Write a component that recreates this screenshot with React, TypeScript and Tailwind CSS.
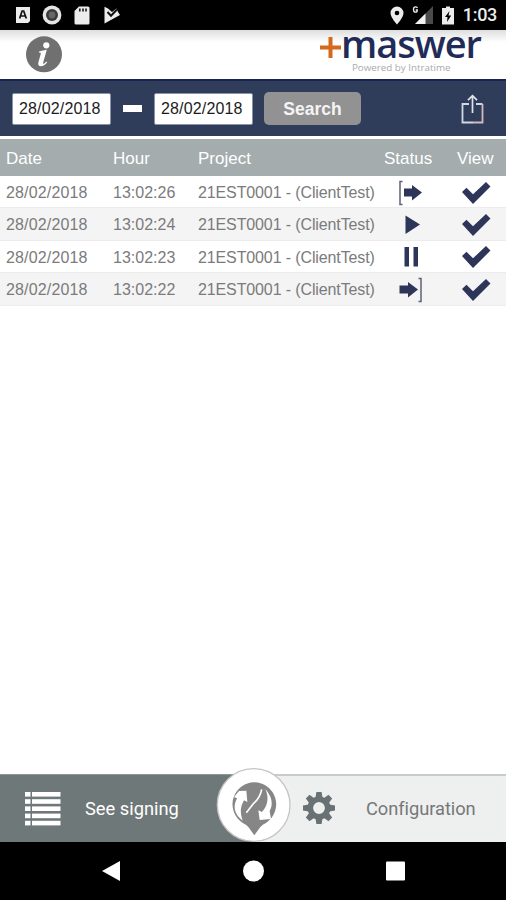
import { ReactNode } from "react";
import { clsx } from "clsx";

type Status = "in" | "play" | "pause" | "out";

interface Signing {
  date: string;
  hour: string;
  project: string;
  status: Status;
}

const signings: Signing[] = [
  { date: "28/02/2018", hour: "13:02:26", project: "21EST0001 - (ClientTest)", status: "in" },
  { date: "28/02/2018", hour: "13:02:24", project: "21EST0001 - (ClientTest)", status: "play" },
  { date: "28/02/2018", hour: "13:02:23", project: "21EST0001 - (ClientTest)", status: "pause" },
  { date: "28/02/2018", hour: "13:02:22", project: "21EST0001 - (ClientTest)", status: "out" },
];

const columns = "grid grid-cols-[107px_84px_187px_68px_60px] pl-1.5 w-[512px]";

function StatusBar() {
  return (
    <div className="flex h-[30px] shrink-0 items-center bg-black pl-4 pr-[9px] text-[#ececec]">
      <svg width="14" height="16" viewBox="0 0 14 16">
        <path d="M0 0h14v14l-2 2H0z" fill="#ececec" />
        <path d="M3.6 11.5 6.1 4h1.6l2.6 7.5M4.5 9h5" fill="none" stroke="#111" strokeWidth="1.7" />
      </svg>
      <svg className="ml-[12px]" width="20" height="20" viewBox="0 0 20 20">
        <circle cx="10" cy="10" r="9.4" fill="#e6e6e6" />
        <circle cx="10" cy="10" r="6" fill="#3a3a3a" />
        <circle cx="10" cy="10" r="3.4" fill="#666" />
      </svg>
      <svg className="ml-[12px]" width="16" height="19" viewBox="0 0 16 19">
        <path d="M5 .5h9q1.5 0 1.5 1.5v15q0 1.5-1.5 1.5H2Q.5 18.5.5 17V5z" fill="#ececec" />
        <path d="M5.8 2.5v3M9 2.5v3M12 2.5v3" stroke="#222" strokeWidth="1.7" />
      </svg>
      <svg className="ml-[14px]" width="17" height="18" viewBox="0 0 17 18">
        <path d="M.5.8 4 2.6 8 6l4.500-3.500L14 6l2 3L.5 17.500z" fill="#ececec" />
        <path d="m3.500 6 3.500 3.800L13 3.500" fill="none" stroke="#111" strokeWidth="2" />
      </svg>
      <div className="ml-auto flex items-center">
        <svg width="14" height="19" viewBox="0 0 14 19">
          <path d="M7 .5a6.500 6.500 0 0 1 6.500 6.500C13.500 11.500 7 18.500 7 18.500S.5 11.500.5 7A6.500 6.500 0 0 1 7 .5z" fill="#ececec" />
          <circle cx="7" cy="7" r="2.300" fill="#000" />
        </svg>
        <svg className="ml-[8px]" width="21" height="20" viewBox="0 0 21 20">
          <path d="M21 1v18H3z" fill="#4a4a4a" />
          <path d="M13.500 8.500V19H3z" fill="#f2f2f2" />
          <path d="M5.500 2.800Q4.800 1.800 3.500 1.800 1.500 1.800 1.500 4.500T3.500 7.200Q5.300 7.200 5.300 5H3.700" fill="none" stroke="#ececec" strokeWidth="1.300" />
        </svg>
        <svg className="ml-[9px]" width="12" height="19" viewBox="0 0 12 19">
          <path d="M4 .5h4V2h4v16.500H0V2h4z" fill="#ececec" />
          <path d="M7.500 5 3 11h2.500L5 16l4.200-6.500H6.500z" fill="#000" />
        </svg>
        <span className="ml-[9px] font-[Roboto] text-[18px] leading-[24px] font-medium tracking-[-0.3px]">1:03</span>
      </div>
    </div>
  );
}

function Header() {
  return (
    <header className="flex h-[49px] shrink-0 items-start justify-between bg-linear-to-b from-[#dedede] via-white via-25% to-white pr-[25px] pl-[26px]">
      <svg className="mt-[6px]" width="36" height="37" viewBox="0 0 36 37">
        <circle cx="18" cy="18.300" r="18" fill="#707070" />
        <circle cx="20.300" cy="9.300" r="3.100" fill="#fff" />
        <path d="M13 15.500q4-1 7.800-1.700l-3.600 12.600q-.4 2 1 1.200l2.300-2.100.7.700q-3 4-6.200 4-3.500-.2-2.600-4l2.400-8.400q.3-1.300-2-1.200z" fill="#fff" />
      </svg>
      <div className="flex flex-col">
        <div className="flex h-[32px] items-start">
          <svg className="mt-[7px]" width="21" height="22" viewBox="0 0 21 22">
            <path d="M10.500 0v21M0 10.600h21" stroke="#d36a1c" strokeWidth="4" />
          </svg>
          <span className="-mt-[2px] font-['Open_Sans'] text-[38px] leading-[30px] font-semibold tracking-[-1px] text-[#1f2c57]">maswer</span>
        </div>
        <span className="ml-[32px] font-['Open_Sans'] text-[9.8px] leading-[12px] text-[#a9a9a9]">Powered by Intratime</span>
      </div>
    </header>
  );
}

function DateField({ value }: { value: string }) {
  return (
    <div className="h-[32px] w-[99px] rounded-[2px] border border-[#8a94a8] bg-white pl-[6px] text-[16px] leading-[30px] tracking-[0.15px] text-[#1c1c1c]">
      {value}
    </div>
  );
}

function SearchBar() {
  return (
    <div className="flex h-[57px] shrink-0 items-center border-t-2 border-[#1b2450] bg-[#2f3d5b] pr-[22px] pl-[12px]">
      <DateField value="28/02/2018" />
      <div className="mx-[12px] h-[7px] w-[19px] bg-white" />
      <DateField value="28/02/2018" />
      <button className="ml-[11px] h-[33px] w-[97px] rounded-[5px] bg-[#929292] text-[17.5px] leading-[32px] font-bold text-[#f4f4f4]">
        Search
      </button>
      <svg className="ml-auto" width="23" height="30" viewBox="0 0 23 30">
        <path d="M8 10H1.500v18.500H12M15 10h6.500" fill="none" stroke="#d0d8e2" strokeWidth="1.800" />
        <path d="M21.500 10v18.500H12" fill="none" stroke="#d5b9bf" strokeWidth="1.800" />
        <path d="M11.500 19V2M7 6.200l4.500-4.500L16 6.200" fill="none" stroke="#dfe3ea" strokeWidth="1.700" />
      </svg>
    </div>
  );
}

function StatusIcon({ status }: { status: Status }) {
  return (
    <svg width="26" height="26" viewBox="0 0 26 26" fill="#2d3659">
      {status === "in" && (
        <>
          <path d="M5.500 1.500H3v23h2.500" fill="none" stroke="#5d6275" strokeWidth="1.500" />
          <path d="M7 8.500h8V5l10 7.500-10 8v-4H7z" />
        </>
      )}
      {status === "play" && <path d="M8.500 3.500 23 12.500 8.500 22z" />}
      {status === "pause" && <path d="M7.500 3H12v19.500H7.500zM16.500 3H21v19.500h-4.500z" />}
      {status === "out" && (
        <>
          <path d="M21.500 1.500H24v23h-2.500" fill="none" stroke="#5d6275" strokeWidth="1.500" />
          <path d="M2.500 8.500h8.500V5l10 7.500-10 8v-4H2.500z" />
        </>
      )}
    </svg>
  );
}

function SigningsTable() {
  return (
    <div className="mt-[3px] overflow-hidden">
      <div className={clsx(columns, "h-[37px] bg-[#a4acae] text-[17px] leading-[39px] text-white")}>
        <span>Date</span>
        <span>Hour</span>
        <span className="pl-px">Project</span>
        <span>Status</span>
        <span className="pl-[5px]">View</span>
      </div>
      {signings.map((s, i) => (
        <div
          key={s.hour}
          className={clsx(
            columns,
            "h-[32.4px] border-b border-[#ececec] text-[16px] leading-[33px] text-[#7b7b7b]",
            i % 2 === 1 ? "bg-[#f4f4f4]" : "bg-white",
          )}
        >
          <span className="tracking-[0.15px]">{s.date}</span>
          <span>{s.hour}</span>
          <span className="pl-px tracking-[-0.12px] whitespace-nowrap">{s.project}</span>
          <span className="flex items-center pl-[13px]">
            <StatusIcon status={s.status} />
          </span>
          <span className="flex items-center pl-[9px]">
            <svg width="30" height="24" viewBox="0 0 30 24">
              <path d="m1 11 4.500-4.200 6.500 6.500L25 1l4.500 4.500L12 23z" fill="#2d3659" />
            </svg>
          </span>
        </div>
      ))}
    </div>
  );
}

function Tab({ active, icon, children }: { active?: boolean; icon: ReactNode; children: ReactNode }) {
  return (
    <div
      className={clsx(
        "flex w-1/2 items-center font-[Roboto] text-[18.3px]",
        active
          ? "border-t border-[#8f9797] bg-[#6f7879] pl-[24px] text-white"
          : "border-t-2 border-[#c9cbcb] bg-[#eeefef] pl-[49px] tracking-[-0.05px] text-[#757878]",
      )}
    >
      {icon}
      {children}
    </div>
  );
}

function ListIcon() {
  return (
    <svg width="37" height="34" viewBox="0 0 37 34" fill="#fff">
      {[0, 7.2, 14.4, 21.6, 28.8].map((y) => (
        <g key={y}>
          <rect x="1" y={y} width="5.500" height="4.600" />
          <rect x="8" y={y} width="28.500" height="4.600" />
        </g>
      ))}
    </svg>
  );
}

function GearIcon() {
  return (
    <svg width="34" height="34" viewBox="-17 -16 34 34">
      {[0, 45, 90, 135, 180, 225, 270, 315].map((a) => (
        <path key={a} transform={`rotate(${a})`} d="M-3.700-9-2.600-16h5.200L3.700-9z" fill="#687173" />
      ))}
      <circle r="8.700" fill="none" stroke="#687173" strokeWidth="5.600" />
    </svg>
  );
}

function SignButton() {
  return (
    <svg className="absolute -top-[7px] left-[216px]" width="75" height="76" viewBox="18 18 225 228">
      <circle cx="131" cy="132" r="109" fill="#fff" stroke="#c5c5c5" strokeWidth="4" />
      <path d="M133 64a66 66 0 0 1 36 121q-12 5-18 13l-18 25-18-25q-6-8-18-13A66 66 0 0 1 133 64z" fill="#868686" />
      <path d="M98 179Q61 152 81 112l-9-4 15-18 22-1 3 34-10-5Q85 145 98 179z" fill="#fff" />
      <path d="M166 84q30 35 13 66l4 24-34 3-4-29 11 5Q183 122 166 84z" fill="#fff" />
      <path d="M155 85q-5 26-24 42l-22 28" fill="none" stroke="#fff" strokeWidth="5" />
    </svg>
  );
}

export default function App() {
  return (
    <div className="flex h-[900px] w-[506px] flex-col overflow-hidden bg-white font-['Liberation_Sans',sans-serif]">
      <StatusBar />
      <Header />
      <SearchBar />
      <SigningsTable />
      <div className="relative mt-auto flex h-[68px] shrink-0">
        <Tab active icon={<span className="mr-[24px]"><ListIcon /></span>}>See signing</Tab>
        <Tab icon={<span className="mr-[30px]"><GearIcon /></span>}>Configuration</Tab>
        <SignButton />
      </div>
      <nav className="flex h-[58px] shrink-0 items-center justify-center bg-black">
        <svg width="304" height="22" viewBox="0 0 304 22" fill="#fff">
          <path d="M19 1v20L1 11z" />
          <circle cx="152.500" cy="11" r="10.500" />
          <rect x="285" y="1.500" width="19" height="19" rx="1" />
        </svg>
      </nav>
    </div>
  );
}
